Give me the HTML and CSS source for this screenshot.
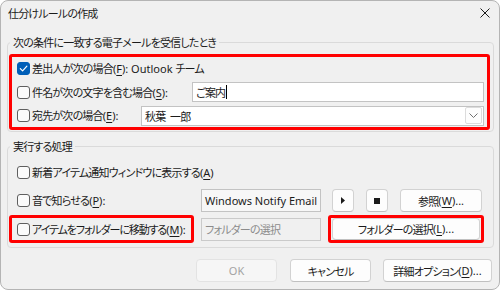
FILE: index.html
```html
<!DOCTYPE html>
<html lang="ja">
<head>
<meta charset="utf-8">
<title>仕分けルールの作成</title>
<link rel="stylesheet" href="styles.css">
</head>
<body>
<div class="window">
  <div class="titlebar">
    <span class="title">仕分けルールの作成</span>
    <svg class="close" width="10" height="10" viewBox="0 0 10 10"><path d="M0.5 0.5 L9.5 9.5 M9.5 0.5 L0.5 9.5" stroke="#1b1b1b" stroke-width="1" fill="none"/></svg>
  </div>

  <fieldset class="group group-cond">
    <legend>次の条件に一致する電子メールを受信したとき</legend>
    <div class="mark mark-cond">
      <div class="row r1">
        <span class="cb checked"><svg width="11" height="11" viewBox="0 0 11 11"><path d="M2.3 5.6 L4.6 7.9 L8.9 3.2" stroke="#ffffff" stroke-width="1.2" fill="none" stroke-linecap="round" stroke-linejoin="round"/></svg></span>
        <span class="lbl">差出人が次の場合<span class="en">(<u>F</u>): Outlook </span>チーム</span>
      </div>
      <div class="row r2">
        <span class="cb"></span>
        <span class="lbl lbl-subject">件名が次の文字を含む場合<span class="en">(<u>S</u>):</span></span>
        <div class="field grow"><span>ご案内</span><span class="caret"></span></div>
      </div>
      <div class="row r3">
        <span class="cb"></span>
        <span class="lbl lbl-to">宛先が次の場合<span class="en">(<u>E</u>):</span></span>
        <div class="field grow combo"><span class="combo-text">秋葉 一郎</span><span class="drop"><svg width="9" height="5" viewBox="0 0 9 5"><path d="M0.5 0.5 L4.5 4.5 L8.5 0.5" stroke="#707070" stroke-width="1" fill="none"/></svg></span></div>
      </div>
    </div>
  </fieldset>

  <fieldset class="group group-act">
    <legend>実行する処理</legend>
    <div class="row rowA">
      <span class="cb"></span>
      <span class="lbl">新着アイテム通知ウィンドウに表示する<span class="en">(<u>A</u>)</span></span>
    </div>
    <div class="row rowP">
      <div class="lblarea">
        <span class="cb"></span>
        <span class="lbl">音で知らせる<span class="en">(<u>P</u>):</span></span>
      </div>
      <div class="field sound"><span class="en">Windows Notify Email</span></div>
      <button class="btn play"><svg width="4" height="7" viewBox="0 0 4 7"><path d="M0 0 L4 3.5 L0 7 Z" fill="#1b1b1b"/></svg></button>
      <button class="btn stop"><svg width="6" height="6" viewBox="0 0 6 6"><rect width="6" height="6" fill="#1b1b1b"/></svg></button>
      <button class="btn browse">参照<span class="en">(<u>W</u>)...</span></button>
    </div>
    <div class="row rowM">
      <div class="mark mark-move">
        <span class="cb"></span>
        <span class="lbl lbl-move">アイテムをフォルダーに移動する<span class="en">(<u>M</u>):</span></span>
      </div>
      <div class="field folder">フォルダーの選択</div>
      <div class="mark mark-folder">
        <button class="btn pick">フォルダーの選択<span class="en">(<u>L</u>)...</span></button>
      </div>
    </div>
  </fieldset>

  <div class="actions">
    <button class="btn ok" disabled><span class="en">OK</span></button>
    <button class="btn cancel">キャンセル</button>
    <button class="btn details">詳細オプション<span class="en">(<u>D</u>)...</span></button>
  </div>
</div>
</body>
</html>
```

FILE: styles.css
```css
* { box-sizing: border-box; }
html, body { margin: 0; padding: 0; background: #ffffff; }
body {
  font-family: "Noto Sans CJK JP", "Noto Sans", sans-serif;
  font-size: 11px;
  line-height: 14px;
  letter-spacing: -0.8px;
  color: #1b1b1b;
  font-feature-settings: "palt" 1;
}
.en { font-family: "Noto Sans", "Noto Sans CJK JP", sans-serif; font-size: 11px; letter-spacing: 0; }
u { text-decoration-thickness: 1px; text-underline-offset: 2px; }

.window {
  width: 500px;
  height: 290px;
  background: #f0f0f0;
  border: 1px solid #b4b4b4;
  border-radius: 8px;
  overflow: hidden;
  display: flex;
  flex-direction: column;
}

.titlebar {
  height: 34px;
  flex: none;
  display: flex;
  justify-content: space-between;
  align-items: flex-start;
  padding: 0 9px 0 7px;
}
.title { line-height: 25px; }
.close { margin-top: 7px; }

.group {
  margin: 0 5px 0 6px;
  padding: 0 0 1px 0;
  border: 1px solid #dadada;
  border-radius: 4px;
  min-width: 0;
  flex: none;
}
.group legend {
  margin-left: 2px;
  padding: 0 3px;
  line-height: 14px;
}

.mark {
  border: 3px solid #ff0000;
  border-radius: 3px;
}
.mark-cond { margin: 5px 3px 0 1px; }

.row { display: flex; align-items: center; }
.r1 { height: 23px; }
.r2 { height: 24px; }
.r3 { height: 23px; }

.cb {
  flex: none;
  width: 13px;
  height: 13px;
  margin: 0 2px 0 5px;
  border: 1px solid #5f5f5f;
  border-radius: 3px;
  background: #fbfbfb;
  display: flex;
  align-items: center;
  justify-content: center;
}
.cb.checked { background: #005fb8; border-color: #005fb8; }
.lbl { white-space: nowrap; }
.lbl-subject { flex: none; width: 160px; }
.lbl-to { flex: none; width: 109px; }
.lbl-move { letter-spacing: -1.1px; }

.field {
  flex: none;
  display: flex;
  align-items: center;
  height: 20px;
  padding-left: 3px;
  border: 1px solid #c3c3c3;
  background: #ffffff;
  white-space: nowrap;
  overflow: hidden;
}
.field.grow { flex: 1 1 0; min-width: 0; margin-right: 3px; }
.caret { width: 1px; height: 14px; background: #000; margin-left: 1px; }
.combo { padding-right: 1px; }
.combo-text { flex: 1; word-spacing: 3px; }
.drop {
  width: 17px;
  height: 17px;
  border: 1px solid #dcdcdc;
  border-radius: 2px;
  background: #fdfdfd;
  display: flex;
  align-items: center;
  justify-content: center;
}

.group-act { margin-top: 7px; padding-bottom: 4px; }
.rowA { margin-top: 8px; height: 22px; padding-left: 4px; }
.rowP { margin-top: 6px; height: 23px; }
.rowM { margin-top: 3px; height: 28px; }

.lblarea {
  width: 193px;
  flex: none;
  display: flex;
  align-items: center;
  padding-left: 4px;
}
.sound { width: 120px; height: 23px; background: #f7f7f7; }
.folder { width: 120px; height: 23px; margin-left: 7px; background: #f0f0f0; color: #8c8c8c; border-color: #cacaca; }

.btn {
  font: inherit;
  color: inherit;
  letter-spacing: inherit;
  line-height: 14px;
  height: 23px;
  padding: 0;
  border: 1px solid #d2d2d2;
  border-bottom-color: #c0c0c0;
  border-radius: 4px;
  background: #fdfdfd;
  display: flex;
  align-items: center;
  justify-content: center;
  flex: none;
  white-space: nowrap;
}
.play { width: 22px; margin-left: 11px; }
.stop { width: 22px; margin-left: 12px; }
.browse { width: 82px; margin-left: 12px; }

.mark-move {
  width: 185px;
  height: 28px;
  margin-left: 1px;
  display: flex;
  align-items: center;
}
.mark-folder {
  width: 156px;
  height: 28px;
  margin-left: 7px;
  padding: 0 1px;
  display: flex;
  align-items: center;
}
.pick { flex: 1; height: 22px; }

.actions {
  margin-top: 11px;
  display: flex;
  justify-content: flex-end;
  padding-right: 7px;
}
.ok { width: 81px; color: #a3a3a3; background: #f6f6f6; border-color: #e3e3e3; }
.ok .en { color: #a3a3a3; }
.cancel { width: 81px; margin-left: 13px; }
.details { width: 109px; margin-left: 12px; }
```
